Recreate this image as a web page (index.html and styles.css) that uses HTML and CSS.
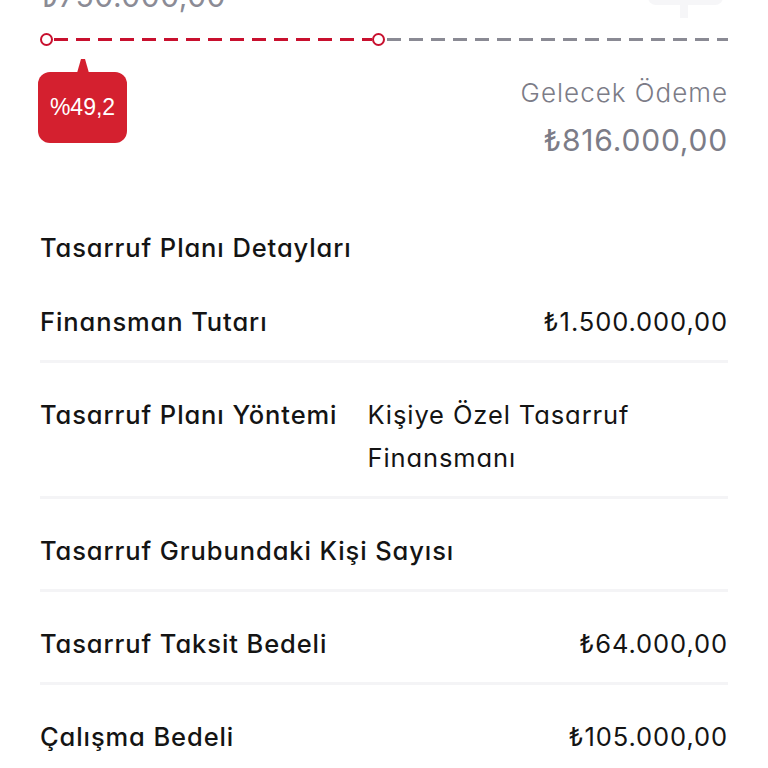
FILE: index.html
```html
<!DOCTYPE html>
<html lang="tr">
<head>
    <meta charset="UTF-8">
    <title>Tasarruf Planı</title>
    <link rel="stylesheet" href="styles.css">
</head>
<body>
    <div class="page">
        <div class="hint-bubble"></div>

        <div class="prev-amount">₺750.000,00</div>

        <div class="track">
            <span class="knob"></span>
            <span class="dash dash-paid"></span>
            <span class="knob"></span>
            <span class="dash dash-left"></span>
        </div>

        <div class="progress-row">
            <div class="badge">%49,2</div>
            <div class="next-pay">
                <div class="next-label">Gelecek Ödeme</div>
                <div class="next-amount">₺816.000,00</div>
            </div>
        </div>

        <div class="section-title">Tasarruf Planı Detayları</div>

        <ul class="details">
            <li class="row">
                <span class="label">Finansman Tutarı</span>
                <span class="value">₺1.500.000,00</span>
            </li>
            <li class="row">
                <span class="label">Tasarruf Planı Yöntemi</span>
                <span class="value">Kişiye Özel Tasarruf Finansmanı</span>
            </li>
            <li class="row">
                <span class="label">Tasarruf Grubundaki Kişi Sayısı</span>
                <span class="value"></span>
            </li>
            <li class="row">
                <span class="label">Tasarruf Taksit Bedeli</span>
                <span class="value">₺64.000,00</span>
            </li>
            <li class="row">
                <span class="label">Çalışma Bedeli</span>
                <span class="value">₺105.000,00</span>
            </li>
        </ul>
    </div>
</body>
</html>
```

FILE: styles.css
```css
* {
    margin: 0;
    padding: 0;
    box-sizing: border-box;
}
ul {
    list-style: none;
}
body {
    background: #fff;
    font-family: Inter, "Noto Sans", sans-serif;
    /* tek katli a harfi */
    font-feature-settings: "cv11";
    color: #141414;
    overflow: hidden;
}
.page {
    position: relative;
    width: 768px;
    height: 768px;
    padding: 0 40px;
    overflow: hidden;
}

/* ust kisimda yarim gorunen balon */
.hint-bubble {
    position: absolute;
    top: -20px;
    left: 648px;
    width: 75px;
    height: 25px;
    border-radius: 8px;
    background: #f6f6f8;
}
.hint-bubble::after {
    content: "";
    position: absolute;
    left: 32px;
    bottom: -13px;
    width: 8px;
    height: 14px;
    background: #f6f6f8;
}

.prev-amount {
    margin-top: -26px;
    font-size: 30px;
    letter-spacing: 0.5px;
    line-height: 44px;
    color: #8b8b95;
}

/* odeme cizgisi */
.track {
    display: flex;
    align-items: center;
    height: 14px;
    margin-top: 14px;
}
.knob {
    flex: 0 0 13px;
    height: 13px;
    border: 2.5px solid #c8102e;
    border-radius: 50%;
    background: #fff;
}
.dash {
    height: 3px;
}
.dash-paid {
    flex: 0 0 318px;
    margin: 0 0 0 1px;
    background: repeating-linear-gradient(90deg, #c8102e 0 14px, transparent 14px 22px);
}
.dash-left {
    flex: 1;
    margin-left: 2px;
    background: repeating-linear-gradient(90deg, #8a8a94 0 14px, transparent 14px 22px);
}

.progress-row {
    display: flex;
    justify-content: space-between;
    align-items: flex-start;
    margin-top: 26px;
}
.badge {
    position: relative;
    width: 89px;
    height: 71px;
    margin-left: -2px;
    border-radius: 12px;
    background: #d4202f;
    color: #fff;
    font-family: "Liberation Sans", Arial, sans-serif;
    font-size: 23px;
    line-height: 71px;
    text-align: center;
}
/* balonun ucu */
.badge::before {
    content: "";
    position: absolute;
    left: 39px;
    top: -13px;
    border-left: 4px solid transparent;
    border-right: 4px solid transparent;
    border-bottom: 14px solid #d4202f;
    width: 4px;
}
.next-pay {
    text-align: right;
    color: #7c7c87;
    padding-top: 1px;
}
.next-label {
    font-size: 26px;
    font-weight: 300;
    letter-spacing: 1px;
    line-height: 40px;
}
.next-amount {
    margin-top: 2px;
    font-size: 30px;
    letter-spacing: 0.8px;
    line-height: 50px;
}

.section-title {
    margin-top: 60px;
    font-size: 25.5px;
    font-weight: 500;
    letter-spacing: 0.9px;
    line-height: 45px;
}

.row {
    display: flex;
    gap: 30px;
    padding: 30px 0 17px;
    border-bottom: 3px solid #f4f4f6;
    font-size: 25.5px;
    letter-spacing: 0.9px;
    line-height: 43px;
}
.row:last-child {
    border-bottom: none;
}
.label {
    flex-shrink: 0;
    font-weight: 500;
}
.value {
    margin-left: auto;
}
```
